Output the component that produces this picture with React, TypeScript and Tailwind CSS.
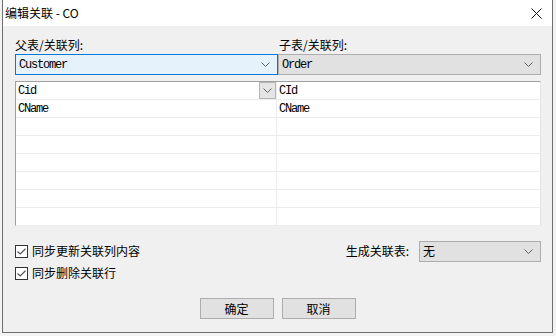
import React from 'react';

const ui = { fontFamily: '"Noto Sans CJK SC", "Noto Sans", sans-serif' };
const mono = { fontFamily: '"Liberation Mono", "DejaVu Sans Mono", monospace' };

function Chevron() {
  return (
    <svg width="9" height="5" viewBox="0 0 9 5" className="shrink-0">
      <path d="M0.5 0.5 L4.5 4.5 L8.5 0.5" fill="none" stroke="#606060" strokeWidth="1" />
    </svg>
  );
}

function Combo({ text, focused, cjk }: { text: string; focused?: boolean; cjk?: boolean }) {
  return (
    <div
      className={
        'h-[21px] flex items-center justify-between pl-[3px] pr-[7px] border ' +
        (focused ? 'bg-[#e5f1fb] border-[#0078d7]' : 'bg-[#e1e1e1] border-[#adadad]')
      }
    >
      <span
        className={cjk ? 'text-[12px] text-black' : 'text-[12px] tracking-[-1.2px] text-black'}
        style={cjk ? ui : mono}
      >
        {text}
      </span>
      <Chevron />
    </div>
  );
}

function Check({ label }: { label: string }) {
  return (
    <div className="flex items-center gap-[4px]">
      <div className="w-[13px] h-[13px] border border-[#333333] bg-white flex items-center justify-center">
        <svg width="9" height="7" viewBox="0 0 9 7">
          <path d="M0.5 3.5 L3.2 6 L8.5 0.8" fill="none" stroke="#555555" strokeWidth="1.2" />
        </svg>
      </div>
      <span className="text-[12px] text-black leading-[16px]">{label}</span>
    </div>
  );
}

const rows = [
  ['Cid', 'CId'],
  ['CName', 'CName'],
  ['', ''],
  ['', ''],
  ['', ''],
  ['', ''],
  ['', ''],
  ['', ''],
];

export default function App() {
  return (
    <div className="w-[556px] h-[336px] bg-[#f3f3f3] overflow-hidden" style={ui}>
      <div className="ml-[2px] w-[551px] h-[333px] border-l border-r border-b border-[#6e6e6e] flex flex-col">
        {/* Title bar */}
        <div className="h-[26px] bg-white flex items-center justify-between pl-[2px] pr-[10px] shrink-0">
          <span className="text-[12px] text-black">编辑关联 - CO</span>
          <svg width="11" height="11" viewBox="0 0 11 11">
            <path d="M0.5 0.5 L10.5 10.5 M10.5 0.5 L0.5 10.5" stroke="#111111" strokeWidth="1" />
          </svg>
        </div>

        <div className="flex-1 bg-[#f0f0f0] pl-[12px] pt-[11px] flex flex-col">
          {/* Labels + combos */}
          <div className="w-[526px] grid grid-cols-2">
            <div className="text-[12px] leading-[16px] text-black">父表/关联列:</div>
            <div className="text-[12px] leading-[16px] text-black pl-[1px]">子表/关联列:</div>
          </div>
          <div className="w-[526px] grid grid-cols-2 mt-[1px]">
            <Combo text="Customer" focused />
            <Combo text="Order" />
          </div>

          {/* Mapping grid */}
          <div className="w-[526px] h-[145px] mt-[6px] border-t border-l border-[#a0a0a0] border-r border-b border-r-[#e3e3e3] border-b-[#e3e3e3] bg-white flex flex-col">
            {rows.map((r, i) => (
              <div key={i} className="h-[18px] flex border-b border-[#ececec] shrink-0">
                <div className="w-[261px] flex items-center justify-between border-r border-[#ececec] pl-[2px]">
                  <span className="text-[12px] tracking-[-1.2px] text-black" style={mono}>{r[0]}</span>
                  {i === 0 && (
                    <div className="w-[17px] h-[17px] bg-[#e5e5e5] border border-[#b5b5b5] flex items-center justify-center">
                      <Chevron />
                    </div>
                  )}
                </div>
                <div className="flex-1 flex items-center pl-[2px]">
                  <span className="text-[12px] tracking-[-1.2px] text-black" style={mono}>{r[1]}</span>
                </div>
              </div>
            ))}
          </div>

          {/* Options */}
          <div className="w-[526px] h-[22px] mt-[14px] flex items-center justify-between">
            <Check label="同步更新关联列内容" />
            <div className="flex items-center gap-[10px]">
              <span className="text-[12px] text-black">生成关联表:</span>
              <div className="w-[122px]">
                <Combo text="无" cjk />
              </div>
            </div>
          </div>
          <div className="h-[22px] flex items-center">
            <Check label="同步删除关联行" />
          </div>

          {/* Buttons */}
          <div className="w-[549px] -ml-[12px] mt-[14px] flex justify-center gap-[8px]">
            <button className="w-[74px] h-[21px] bg-[#e1e1e1] border border-[#adadad] text-[12px] text-black flex items-center justify-center">
              确定
            </button>
            <button className="w-[74px] h-[21px] bg-[#e1e1e1] border border-[#adadad] text-[12px] text-black flex items-center justify-center">
              取消
            </button>
          </div>
        </div>
      </div>
    </div>
  );
}
